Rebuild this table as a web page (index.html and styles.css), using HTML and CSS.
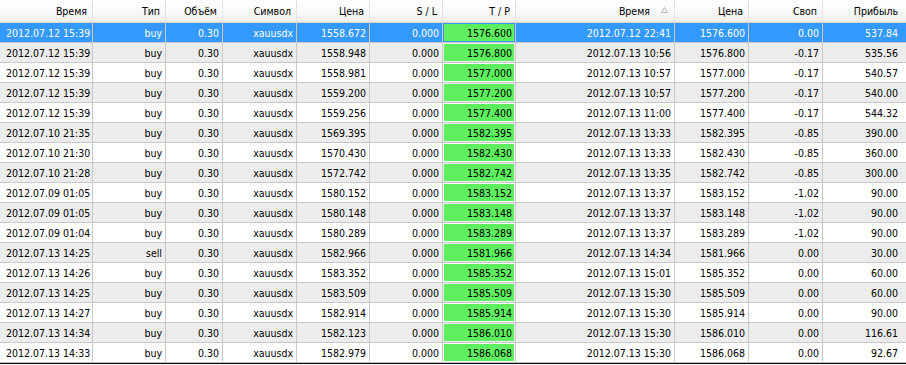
FILE: index.html
```html
<!DOCTYPE html>
<html>
<head>
<meta charset="utf-8">
<link rel="stylesheet" href="styles.css">
</head>
<body>
<div class="grid">
  <div class="row head">
    <div class="c">Время</div>
    <div class="c">Тип</div>
    <div class="c">Объём</div>
    <div class="c">Символ</div>
    <div class="c">Цена</div>
    <div class="c">S / L</div>
    <div class="c">T / P</div>
    <div class="c sort"><span>Время</span><svg class="tri" width="7" height="6" viewBox="0 0 7 6"><path d="M3.5 0.5 L6.5 5.5 L0.5 5.5 Z" fill="none" stroke="#b8b8b8" stroke-width="1"/></svg></div>
    <div class="c">Цена</div>
    <div class="c">Своп</div>
    <div class="c last">Прибыль</div>
  </div>
  <div class="row sel"><div class="c l">2012.07.12 15:39</div><div class="c">buy</div><div class="c">0.30</div><div class="c">xauusdx</div><div class="c">1558.672</div><div class="c">0.000</div><div class="c tp"><span>1576.600</span></div><div class="c">2012.07.12 22:41</div><div class="c">1576.600</div><div class="c">0.00</div><div class="c last">537.84</div></div>
  <div class="row alt"><div class="c l">2012.07.12 15:39</div><div class="c">buy</div><div class="c">0.30</div><div class="c">xauusdx</div><div class="c">1558.948</div><div class="c">0.000</div><div class="c tp"><span>1576.800</span></div><div class="c">2012.07.13 10:56</div><div class="c">1576.800</div><div class="c">-0.17</div><div class="c last">535.56</div></div>
  <div class="row"><div class="c l">2012.07.12 15:39</div><div class="c">buy</div><div class="c">0.30</div><div class="c">xauusdx</div><div class="c">1558.981</div><div class="c">0.000</div><div class="c tp"><span>1577.000</span></div><div class="c">2012.07.13 10:57</div><div class="c">1577.000</div><div class="c">-0.17</div><div class="c last">540.57</div></div>
  <div class="row alt"><div class="c l">2012.07.12 15:39</div><div class="c">buy</div><div class="c">0.30</div><div class="c">xauusdx</div><div class="c">1559.200</div><div class="c">0.000</div><div class="c tp"><span>1577.200</span></div><div class="c">2012.07.13 10:57</div><div class="c">1577.200</div><div class="c">-0.17</div><div class="c last">540.00</div></div>
  <div class="row"><div class="c l">2012.07.12 15:39</div><div class="c">buy</div><div class="c">0.30</div><div class="c">xauusdx</div><div class="c">1559.256</div><div class="c">0.000</div><div class="c tp"><span>1577.400</span></div><div class="c">2012.07.13 11:00</div><div class="c">1577.400</div><div class="c">-0.17</div><div class="c last">544.32</div></div>
  <div class="row alt"><div class="c l">2012.07.10 21:35</div><div class="c">buy</div><div class="c">0.30</div><div class="c">xauusdx</div><div class="c">1569.395</div><div class="c">0.000</div><div class="c tp"><span>1582.395</span></div><div class="c">2012.07.13 13:33</div><div class="c">1582.395</div><div class="c">-0.85</div><div class="c last">390.00</div></div>
  <div class="row"><div class="c l">2012.07.10 21:30</div><div class="c">buy</div><div class="c">0.30</div><div class="c">xauusdx</div><div class="c">1570.430</div><div class="c">0.000</div><div class="c tp"><span>1582.430</span></div><div class="c">2012.07.13 13:33</div><div class="c">1582.430</div><div class="c">-0.85</div><div class="c last">360.00</div></div>
  <div class="row alt"><div class="c l">2012.07.10 21:28</div><div class="c">buy</div><div class="c">0.30</div><div class="c">xauusdx</div><div class="c">1572.742</div><div class="c">0.000</div><div class="c tp"><span>1582.742</span></div><div class="c">2012.07.13 13:35</div><div class="c">1582.742</div><div class="c">-0.85</div><div class="c last">300.00</div></div>
  <div class="row"><div class="c l">2012.07.09 01:05</div><div class="c">buy</div><div class="c">0.30</div><div class="c">xauusdx</div><div class="c">1580.152</div><div class="c">0.000</div><div class="c tp"><span>1583.152</span></div><div class="c">2012.07.13 13:37</div><div class="c">1583.152</div><div class="c">-1.02</div><div class="c last">90.00</div></div>
  <div class="row alt"><div class="c l">2012.07.09 01:05</div><div class="c">buy</div><div class="c">0.30</div><div class="c">xauusdx</div><div class="c">1580.148</div><div class="c">0.000</div><div class="c tp"><span>1583.148</span></div><div class="c">2012.07.13 13:37</div><div class="c">1583.148</div><div class="c">-1.02</div><div class="c last">90.00</div></div>
  <div class="row"><div class="c l">2012.07.09 01:04</div><div class="c">buy</div><div class="c">0.30</div><div class="c">xauusdx</div><div class="c">1580.289</div><div class="c">0.000</div><div class="c tp"><span>1583.289</span></div><div class="c">2012.07.13 13:37</div><div class="c">1583.289</div><div class="c">-1.02</div><div class="c last">90.00</div></div>
  <div class="row alt"><div class="c l">2012.07.13 14:25</div><div class="c">sell</div><div class="c">0.30</div><div class="c">xauusdx</div><div class="c">1582.966</div><div class="c">0.000</div><div class="c tp"><span>1581.966</span></div><div class="c">2012.07.13 14:34</div><div class="c">1581.966</div><div class="c">0.00</div><div class="c last">30.00</div></div>
  <div class="row"><div class="c l">2012.07.13 14:26</div><div class="c">buy</div><div class="c">0.30</div><div class="c">xauusdx</div><div class="c">1583.352</div><div class="c">0.000</div><div class="c tp"><span>1585.352</span></div><div class="c">2012.07.13 15:01</div><div class="c">1585.352</div><div class="c">0.00</div><div class="c last">60.00</div></div>
  <div class="row alt"><div class="c l">2012.07.13 14:25</div><div class="c">buy</div><div class="c">0.30</div><div class="c">xauusdx</div><div class="c">1583.509</div><div class="c">0.000</div><div class="c tp"><span>1585.509</span></div><div class="c">2012.07.13 15:30</div><div class="c">1585.509</div><div class="c">0.00</div><div class="c last">60.00</div></div>
  <div class="row"><div class="c l">2012.07.13 14:27</div><div class="c">buy</div><div class="c">0.30</div><div class="c">xauusdx</div><div class="c">1582.914</div><div class="c">0.000</div><div class="c tp"><span>1585.914</span></div><div class="c">2012.07.13 15:30</div><div class="c">1585.914</div><div class="c">0.00</div><div class="c last">90.00</div></div>
  <div class="row alt"><div class="c l">2012.07.13 14:34</div><div class="c">buy</div><div class="c">0.30</div><div class="c">xauusdx</div><div class="c">1582.123</div><div class="c">0.000</div><div class="c tp"><span>1586.010</span></div><div class="c">2012.07.13 15:30</div><div class="c">1586.010</div><div class="c">0.00</div><div class="c last">116.61</div></div>
  <div class="row"><div class="c l">2012.07.13 14:33</div><div class="c">buy</div><div class="c">0.30</div><div class="c">xauusdx</div><div class="c">1582.979</div><div class="c">0.000</div><div class="c tp"><span>1586.068</span></div><div class="c">2012.07.13 15:30</div><div class="c">1586.068</div><div class="c">0.00</div><div class="c last">92.67</div></div>
  <div class="endline"></div>
</div>
</body>
</html>
```

FILE: styles.css
```css
html, body {
  margin: 0;
  padding: 0;
  background: #ffffff;
}
body {
  font-family: "DejaVu Sans Condensed", "DejaVu Sans", sans-serif;
  font-size: 10.5px;
  color: #000000;
}
.grid {
  width: 906px;
  display: flex;
  flex-direction: column;
}
.row {
  display: grid;
  grid-template-columns: 93px 73px 57px 74px 73px 73px 73px 159px 74px 74px 83px;
  height: 20px;
  box-sizing: border-box;
  border-bottom: 1px solid #c8c8c8;
  background: #ffffff;
}
.row.alt {
  background: #ececec;
}
.row.sel {
  background: #3399ff;
  color: #ffffff;
}
.c {
  box-sizing: border-box;
  border-right: 1px solid #c8c8c8;
  display: flex;
  align-items: center;
  justify-content: flex-end;
  padding: 1px 3px 0 3px;
  white-space: nowrap;
  overflow: hidden;
  line-height: 18px;
}
.c.l {
  justify-content: flex-start;
  padding: 1px 3px 0 6px;
}
.c.last {
  border-right: none;
  padding-right: 8px;
}
.head {
  height: 23px;
  background: linear-gradient(#ffffff 0%, #fbfbfb 40%, #eeeeee 100%);
  border-bottom: 1px solid #d5d5d5;
}
.head .c {
  border-right: 1px solid #e4e4e4;
  padding: 0 5px 1px 3px;
}
.head .c.last {
  border-right: none;
  padding-right: 8px;
}
.head .sort {
  padding-right: 6px;
  gap: 11px;
}
.tri {
  display: block;
  margin-top: -2px;
}
.c.tp {
  padding: 1px;
  color: #000000;
}
.c.tp span {
  flex: 1;
  align-self: stretch;
  background: #5eef5e;
  text-align: right;
  padding: 1px 2px 0 0;
  line-height: 16px;
}
.endline {
  height: 1px;
  background: #000000;
}
```
